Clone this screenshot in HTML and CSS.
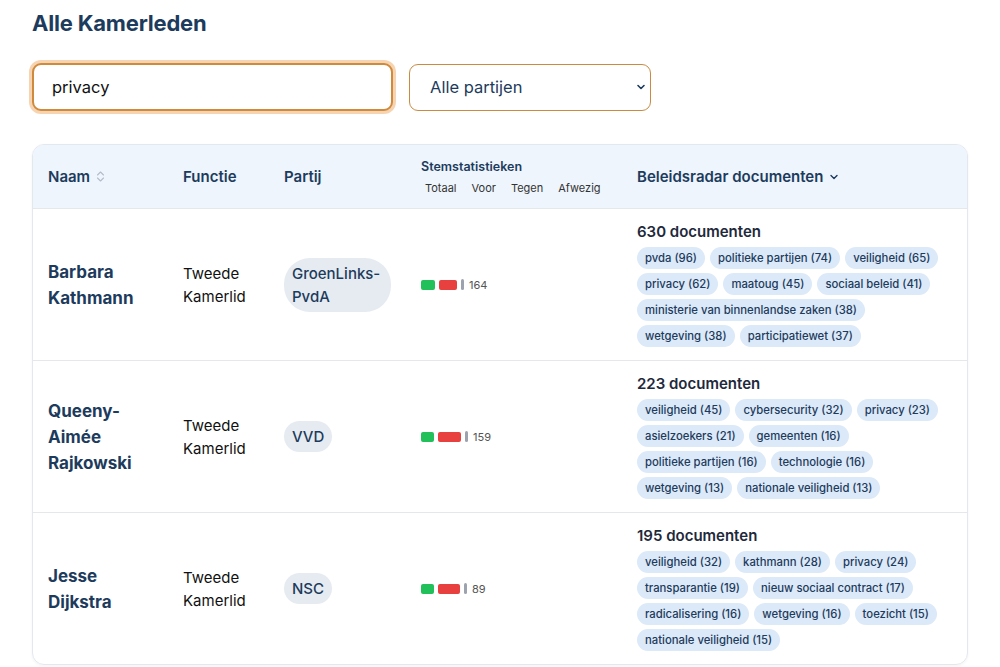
FILE: index.html
```html
<!DOCTYPE html>
<html lang="nl">
<head>
    <meta charset="UTF-8">
    <meta name="viewport" content="width=device-width, initial-scale=1.0">
    <title>Alle Kamerleden</title>
    <link rel="stylesheet" href="styles.css">
</head>
<body>
    <div class="page">
        <h1>Alle Kamerleden</h1>

        <div class="filters">
            <input type="text" class="search" value="privacy" placeholder="Zoek op naam of onderwerp">
            <div class="select-wrap">
                <select class="party-select">
                    <option>Alle partijen</option>
                    <option>GroenLinks-PvdA</option>
                    <option>VVD</option>
                    <option>NSC</option>
                </select>
                <svg class="select-arrow" width="10" height="10" viewBox="0 0 10 10">
                    <path d="M2 3.5 L5 6.5 L8 3.5" fill="none" stroke="#1d3b5c" stroke-width="1.6" stroke-linecap="round" stroke-linejoin="round"/>
                </svg>
            </div>
        </div>

        <div class="members-card">
            <table class="members">
                <colgroup>
                    <col style="width: 135px;">
                    <col style="width: 101px;">
                    <col style="width: 137px;">
                    <col style="width: 216px;">
                    <col>
                </colgroup>
                <thead>
                    <tr>
                        <th>
                            <span class="sortable">Naam
                                <svg width="9" height="13" viewBox="0 0 9 13">
                                    <path d="M1.5 5 L4.5 2 L7.5 5 M1.5 8 L4.5 11 L7.5 8" fill="none" stroke="#b4bcc8" stroke-width="1.1" stroke-linecap="round" stroke-linejoin="round"/>
                                </svg>
                            </span>
                        </th>
                        <th>Functie</th>
                        <th>Partij</th>
                        <th>
                            <div class="stats-title">Stemstatistieken</div>
                            <div class="stats-labels">
                                <span>Totaal</span><span>Voor</span><span>Tegen</span><span>Afwezig</span>
                            </div>
                        </th>
                        <th>
                            <span class="sortable">Beleidsradar documenten
                                <svg width="10" height="10" viewBox="0 0 10 10">
                                    <path d="M2 3.5 L5 6.5 L8 3.5" fill="none" stroke="#1d3b5c" stroke-width="1.4" stroke-linecap="round" stroke-linejoin="round"/>
                                </svg>
                            </span>
                        </th>
                    </tr>
                </thead>
                <tbody>
                    <tr>
                        <td class="name">Barbara Kathmann</td>
                        <td class="role">Tweede Kamerlid</td>
                        <td><span class="party">GroenLinks-PvdA</span></td>
                        <td>
                            <div class="votes">
                                <span class="bar bar-for" style="width: 14px;"></span>
                                <span class="bar bar-against" style="width: 18px;"></span>
                                <span class="bar bar-absent"></span>
                                <span class="total">164</span>
                            </div>
                        </td>
                        <td class="docs">
                            <div class="docs-count">630 documenten</div>
                            <div class="tags">
                                <span>pvda (96)</span>
                                <span>politieke partijen (74)</span>
                                <span>veiligheid (65)</span>
                                <span>privacy (62)</span>
                                <span>maatoug (45)</span>
                                <span>sociaal beleid (41)</span>
                                <span>ministerie van binnenlandse zaken (38)</span>
                                <span>wetgeving (38)</span>
                                <span>participatiewet (37)</span>
                            </div>
                        </td>
                    </tr>
                    <tr>
                        <td class="name">Queeny-Aimée Rajkowski</td>
                        <td class="role">Tweede Kamerlid</td>
                        <td><span class="party">VVD</span></td>
                        <td>
                            <div class="votes">
                                <span class="bar bar-for" style="width: 13px;"></span>
                                <span class="bar bar-against" style="width: 23px;"></span>
                                <span class="bar bar-absent"></span>
                                <span class="total">159</span>
                            </div>
                        </td>
                        <td class="docs">
                            <div class="docs-count">223 documenten</div>
                            <div class="tags">
                                <span>veiligheid (45)</span>
                                <span>cybersecurity (32)</span>
                                <span>privacy (23)</span>
                                <span>asielzoekers (21)</span>
                                <span>gemeenten (16)</span>
                                <span>politieke partijen (16)</span>
                                <span>technologie (16)</span>
                                <span>wetgeving (13)</span>
                                <span>nationale veiligheid (13)</span>
                            </div>
                        </td>
                    </tr>
                    <tr>
                        <td class="name">Jesse Dijkstra</td>
                        <td class="role">Tweede Kamerlid</td>
                        <td><span class="party">NSC</span></td>
                        <td>
                            <div class="votes">
                                <span class="bar bar-for" style="width: 13px;"></span>
                                <span class="bar bar-against" style="width: 22px;"></span>
                                <span class="bar bar-absent"></span>
                                <span class="total">89</span>
                            </div>
                        </td>
                        <td class="docs">
                            <div class="docs-count">195 documenten</div>
                            <div class="tags">
                                <span>veiligheid (32)</span>
                                <span>kathmann (28)</span>
                                <span>privacy (24)</span>
                                <span>transparantie (19)</span>
                                <span>nieuw sociaal contract (17)</span>
                                <span>radicalisering (16)</span>
                                <span>wetgeving (16)</span>
                                <span>toezicht (15)</span>
                                <span>nationale veiligheid (15)</span>
                            </div>
                        </td>
                    </tr>
                </tbody>
            </table>
        </div>
    </div>
</body>
</html>
```

FILE: styles.css
```css
body {
    margin: 0;
    font-family: Inter, "Noto Sans", sans-serif;
    background: #ffffff;
    color: #111827;
}

.page {
    padding: 8px 32px 32px;
}

h1 {
    margin: 0;
    font-size: 22px;
    line-height: 30px;
    font-weight: 700;
    color: #1d3b5c;
    letter-spacing: -0.2px;
}

/* search + party filter */
.filters {
    display: flex;
    align-items: center;
    gap: 16px;
    margin-top: 25px;
}

.search {
    width: 361px;
    height: 48px;
    box-sizing: border-box;
    border: 2px solid #cf8a3c;
    border-radius: 9px;
    padding: 0 18px;
    font-family: inherit;
    font-size: 16.5px;
    color: #111;
    outline: none;
    box-shadow: 0 0 0 3px rgba(240, 170, 100, 0.5);
}

.select-wrap {
    position: relative;
}

.party-select {
    appearance: none;
    -webkit-appearance: none;
    width: 242px;
    height: 47px;
    box-sizing: border-box;
    border: 1.5px solid #c98b42;
    border-radius: 9px;
    background: #fff;
    padding: 0 30px 0 20px;
    font-family: inherit;
    font-size: 16.5px;
    color: #1d3b5c;
}

.select-arrow {
    position: absolute;
    right: 5px;
    top: 18px;
    pointer-events: none;
}

/* table card */
.members-card {
    margin-top: 33px;
    border: 1px solid #e3e8ee;
    border-radius: 12px;
    overflow: hidden;
    box-shadow: 0 1px 3px rgba(0, 0, 0, 0.05);
}

.members {
    width: 100%;
    border-collapse: collapse;
    table-layout: fixed;
}

.members th {
    background: #eef5fd;
    height: 63px;
    padding: 0 15px;
    text-align: left;
    font-size: 15px;
    font-weight: 600;
    color: #1d3b5c;
    vertical-align: middle;
}

.sortable {
    display: inline-flex;
    align-items: center;
    gap: 6px;
}

.stats-title {
    font-size: 12.5px;
    line-height: 16px;
    font-weight: 600;
    color: #1d3b5c;
}

.stats-labels {
    display: flex;
    gap: 15px;
    margin-top: 6px;
    padding-left: 4px;
    font-size: 11px;
    line-height: 14px;
    font-weight: 400;
    color: #333;
}

.members td {
    padding: 13px 15px;
    border-top: 1px solid #e5e7eb;
    vertical-align: middle;
}

.name {
    font-size: 17px;
    line-height: 26px;
    font-weight: 700;
    color: #1d3b5c;
    padding-right: 30px !important;
}

.role {
    font-size: 15px;
    line-height: 23px;
    color: #111;
}

.party {
    display: inline-block;
    max-width: 108px;
    box-sizing: border-box;
    padding: 4px 8px;
    border-radius: 26px;
    background: #e6ebf1;
    font-size: 15px;
    line-height: 23px;
    font-weight: 500;
    color: #1d3b5c;
}

.votes {
    display: flex;
    align-items: center;
    gap: 4px;
}

.bar {
    display: inline-block;
    height: 10px;
    border-radius: 2px;
}

.bar-for {
    background: #22c05a;
}

.bar-against {
    background: #e8403f;
}

.bar-absent {
    width: 3px;
    height: 11px;
    background: #9ca3af;
}

.total {
    font-size: 11px;
    color: #555;
    margin-left: 1px;
}

.docs-count {
    font-size: 15px;
    font-weight: 600;
    color: #1e293b;
    line-height: 20px;
    margin-bottom: 5px;
}

.tags {
    display: flex;
    flex-wrap: wrap;
    gap: 4px 5px;
}

.tags span {
    background: #dce9f8;
    color: #1d3b5c;
    font-size: 11.3px;
    font-weight: 500;
    line-height: 22px;
    padding: 0 8px;
    border-radius: 11px;
    white-space: nowrap;
}
```
